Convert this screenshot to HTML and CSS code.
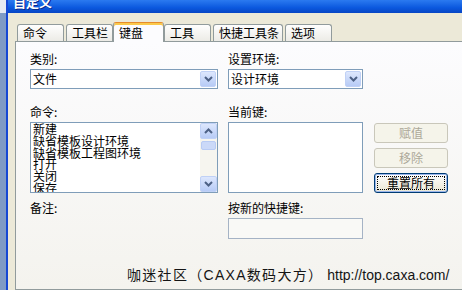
FILE: index.html
```
<!DOCTYPE html>
<html lang="zh-CN">
<head>
    <meta charset="UTF-8">
    <title>自定义</title>
    <link rel="stylesheet" href="styles.css">
</head>
<body>
    <div class="desk"></div>
    <div class="window">
        <div class="titlebar"><span>自定义</span></div>
        <div class="body">
            <div class="tabs">
                <div class="tab">命令</div>
                <div class="tab">工具栏</div>
                <div class="tab on">键盘</div>
                <div class="tab">工具</div>
                <div class="tab">快捷工具条</div>
                <div class="tab">选项</div>
            </div>
            <div class="panel">
                <div class="row">
                    <div class="field">
                        <div class="label">类别:</div>
                        <div class="combo">
                            <span>文件</span>
                            <span class="drop"><svg width="9" height="6" viewBox="0 0 9 6"><polyline points="1,1 4.5,4.5 8,1" fill="none" stroke="#4d6185" stroke-width="2"/></svg></span>
                        </div>
                    </div>
                    <div class="field">
                        <div class="label">设置环境:</div>
                        <div class="combo">
                            <span>设计环境</span>
                            <span class="drop"><svg width="9" height="6" viewBox="0 0 9 6"><polyline points="1,1 4.5,4.5 8,1" fill="none" stroke="#4d6185" stroke-width="2"/></svg></span>
                        </div>
                    </div>
                </div>

                <div class="row row-mid">
                    <div class="field">
                        <div class="label">命令:</div>
                        <div class="listbox">
                            <ul class="items">
                                <li>新建</li>
                                <li>缺省模板设计环境</li>
                                <li>缺省模板工程图环境</li>
                                <li>打开</li>
                                <li>关闭</li>
                                <li>保存</li>
                            </ul>
                            <div class="vscroll">
                                <span class="sb-btn"><svg width="9" height="6" viewBox="0 0 9 6"><polyline points="1,5 4.5,1.5 8,5" fill="none" stroke="#4d6185" stroke-width="2"/></svg></span>
                                <div class="track"><span class="thumb"></span></div>
                                <span class="sb-btn"><svg width="9" height="6" viewBox="0 0 9 6"><polyline points="1,1 4.5,4.5 8,1" fill="none" stroke="#4d6185" stroke-width="2"/></svg></span>
                            </div>
                        </div>
                    </div>
                    <div class="field">
                        <div class="label">当前键:</div>
                        <div class="keybox"></div>
                    </div>
                    <div class="buttons">
                        <button class="btn" disabled>赋值</button>
                        <button class="btn" disabled>移除</button>
                        <button class="btn default">重置所有</button>
                    </div>
                </div>

                <div class="row row-bottom">
                    <div class="field">
                        <div class="label">备注:</div>
                    </div>
                    <div class="field">
                        <div class="label">按新的快捷键:</div>
                        <div class="keyinput"></div>
                    </div>
                </div>

                <div class="watermark"><span class="cn">咖迷社区（CAXA数码大方）</span> <span>http://top.caxa.com/</span></div>
            </div>
        </div>
    </div>
</body>
</html>
```
FILE: styles.css
```
html, body {
    margin: 0;
    height: 100%;
    overflow: hidden;
}
body {
    display: flex;
    background: #7f9bc5;
    font-family: "Noto Sans CJK SC", sans-serif;
    font-size: 12px;
    color: #000;
}
.desk {
    width: 6px;
    flex: none;
    background: linear-gradient(#e6eaf2 0 13px, #7f9bc5 13px);
}
.window {
    width: 470px;
    flex: none;
    display: flex;
    flex-direction: column;
    border-left: 2px solid #1548d4;
    background: #ece9d8;
}
.titlebar {
    height: 13px;
    flex: none;
    display: flex;
    align-items: flex-end;
    padding-left: 5px;
    overflow: hidden;
    background: linear-gradient(#2b7af0, #0b58de 60%, #0846c4);
    color: #fff;
    font-weight: bold;
    font-size: 13px;
}
.titlebar span {
    line-height: 13px;
    margin-bottom: 5px;
    text-shadow: 1px 1px 0 #0c2a8a;
}
.body {
    flex: 1;
    display: flex;
    flex-direction: column;
    padding-left: 7px;
}
.tabs {
    height: 28px;
    flex: none;
    display: flex;
    align-items: flex-end;
    gap: 2px;
    padding-left: 2px;
}
.tab {
    box-sizing: border-box;
    height: 17px;
    min-width: 47px;
    padding: 0 3px 0 5px;
    border: 1px solid #919b9c;
    border-bottom: none;
    border-radius: 3px 3px 0 0;
    background: linear-gradient(#fefefe, #ecebe6);
    line-height: 15px;
    white-space: nowrap;
}
.tab.on {
    position: relative;
    z-index: 1;
    height: 20px;
    min-width: 51px;
    margin: 0 -2px -1px -2px;
    border-top-color: #e68b2c;
    background: #fcfcfe;
    box-shadow: inset 0 2px 0 #fbc94a;
    line-height: 19px;
}
.panel {
    flex: 1;
    border: 1px solid #919b9c;
    background: linear-gradient(#fcfcfe, #f4f3ee);
    padding: 10px 0 0 14px;
}
.row {
    display: grid;
    grid-template-columns: 188px 135px 75px;
    column-gap: 10px;
}
.row-mid {
    margin-top: 16px;
}
.row-bottom {
    margin-top: 8px;
}
.label {
    height: 14px;
    line-height: 14px;
    margin-bottom: 3px;
    white-space: nowrap;
}
.combo {
    box-sizing: border-box;
    height: 20px;
    display: flex;
    align-items: center;
    padding-left: 2px;
    border: 1px solid #7f9db9;
    background: #fff;
    line-height: 18px;
}
.drop, .sb-btn {
    box-sizing: border-box;
    display: flex;
    align-items: center;
    justify-content: center;
    border: 1px solid #c0d1f6;
    border-radius: 2px;
    background: linear-gradient(#dde7fd, #b7cbf6);
}
.drop {
    width: 16px;
    height: 16px;
    margin-left: auto;
    margin-right: 1px;
}
.listbox {
    box-sizing: border-box;
    height: 71px;
    display: flex;
    border: 1px solid #7f9db9;
    background: #fff;
    overflow: hidden;
}
.items {
    flex: 1;
    margin: 0;
    padding: 0 0 0 2px;
    list-style: none;
    line-height: 11.75px;
    overflow: hidden;
    white-space: nowrap;
}
.vscroll {
    width: 17px;
    flex: none;
    display: flex;
    flex-direction: column;
    background: #f6f5ef;
}
.sb-btn {
    height: 16px;
    flex: none;
}
.track {
    flex: 1;
    display: flex;
    flex-direction: column;
}
.thumb {
    height: 7px;
    margin: 2px 1px 0;
    border: 1px solid #b8cbf4;
    border-radius: 2px;
    background: #cbd9f8;
}
.keybox {
    box-sizing: border-box;
    height: 71px;
    border: 1px solid #7f9db9;
    background: #fff;
}
.buttons {
    display: flex;
    flex-direction: column;
    gap: 5px;
    padding: 18px 0 0 1px;
}
.btn {
    box-sizing: border-box;
    width: 74px;
    height: 20px;
    padding: 0;
    border-radius: 3px;
    font: inherit;
    line-height: 18px;
}
.btn:disabled {
    border: 1px solid #c9c7ba;
    background: #f5f4ea;
    color: #aca899;
}
.btn.default {
    border: 1px solid #003c74;
    background: linear-gradient(#ffffff, #ece9d8 90%);
    box-shadow: inset 0 0 0 1px #9cb7ec;
    outline: 1px dotted #000;
    outline-offset: -4px;
    color: #000;
}
.keyinput {
    box-sizing: border-box;
    height: 21px;
    margin-top: 1px;
    border: 1px solid #a5b3c5;
    background: #f9f9f6;
}
.watermark {
    margin-top: 27px;
    padding-left: 97px;
    font-family: "Liberation Sans", "Noto Sans CJK SC", sans-serif;
    font-size: 14px;
    line-height: 18px;
    white-space: nowrap;
    color: #151515;
}
.watermark .cn {
    letter-spacing: 1.3px;
}
```
